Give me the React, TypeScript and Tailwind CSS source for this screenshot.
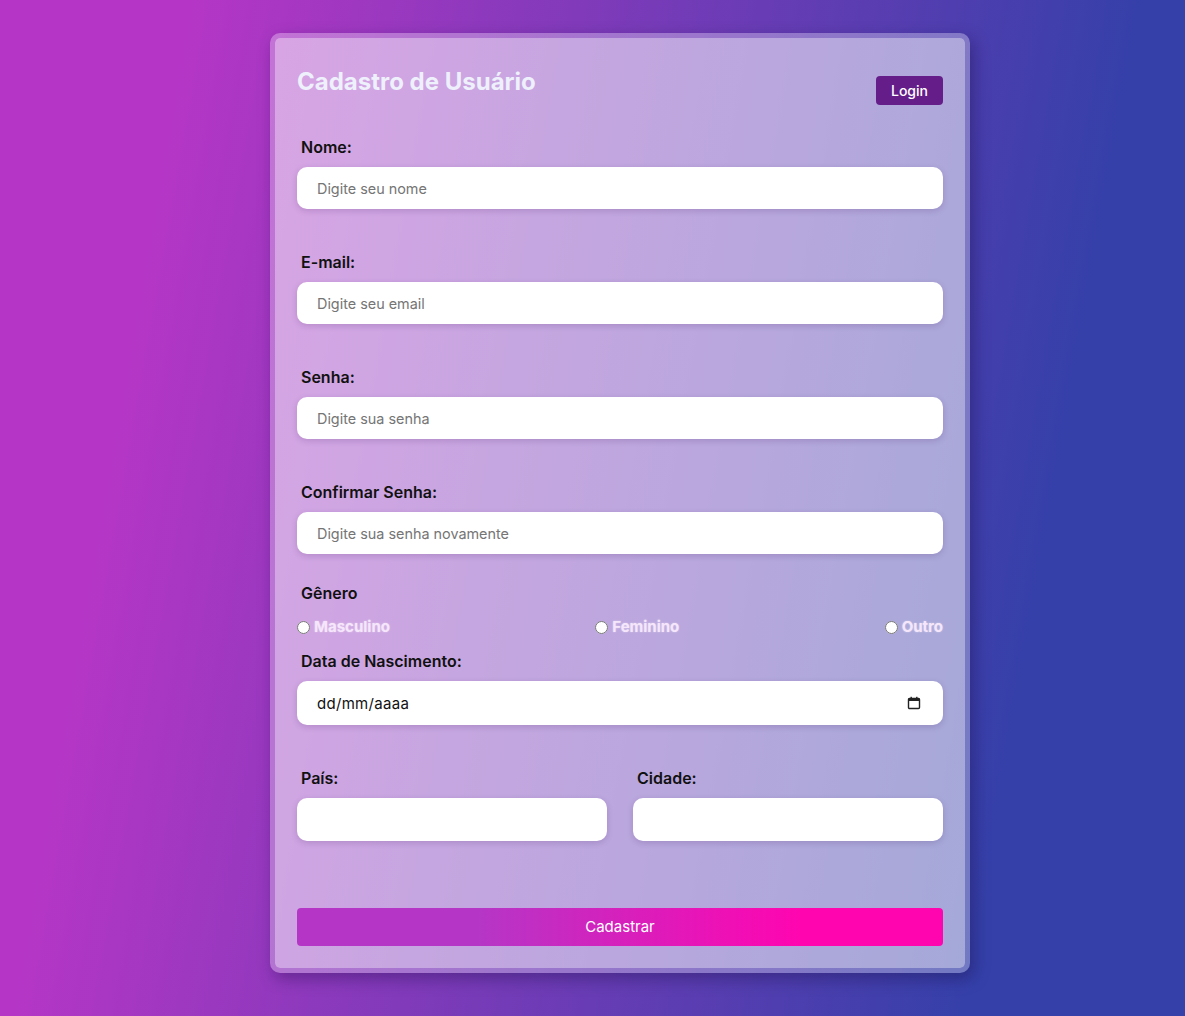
import React from "react";

const labelCls = "block pl-1 mb-2 text-base leading-6 font-semibold text-[#111]";
const inputCls =
  "block w-full h-[42px] rounded-[10px] bg-white px-5 text-[14.4px] text-[#222] placeholder:text-[#757575] outline-none shadow-[0_2px_6px_rgba(60,20,90,0.18)]";

function Field({ label, placeholder, type = "text" }: { label: string; placeholder?: string; type?: string }) {
  return (
    <div className="mb-[41px]">
      <label className={labelCls}>{label}</label>
      <input type={type} placeholder={placeholder} className={inputCls} />
    </div>
  );
}

function Radio({ label }: { label: string }) {
  return (
    <label className="flex items-center gap-[4px]">
      <input type="radio" name="genero" className="m-0 h-[13px] w-[13px]" />
      <span className="text-[15px] font-bold leading-5 text-[#f6e6fb] [text-shadow:0_0_2px_rgba(255,255,255,0.5)]">
        {label}
      </span>
    </label>
  );
}

export default function App() {
  return (
    <div
      className="min-h-screen w-full bg-[linear-gradient(100deg,#b536c6_14%,#3540a9_84%)] pl-[270px] pt-[33px] pb-[43px]"
      style={{ fontFamily: "Inter, 'Noto Sans', sans-serif" }}
    >
      <div className="w-[700px] rounded-[10px] border-[5px] border-white/30 bg-white/55 bg-clip-padding px-[22px] pt-[28px] pb-[22px] shadow-[4px_6px_16px_rgba(20,10,60,0.35)]">
        {/* Header */}
        <div className="flex items-start justify-between">
          <h2 className="text-2xl font-bold leading-8 text-[#eef0fb]">Cadastro de Usuário</h2>
          <button className="mt-[10px] h-[29px] w-[67px] rounded-[4px] bg-[#651d8a] text-sm font-medium text-white">
            Login
          </button>
        </div>

        <div className="mt-[30px]">
          <Field label="Nome:" placeholder="Digite seu nome" />
          <Field label="E-mail:" placeholder="Digite seu email" type="email" />
          <Field label="Senha:" placeholder="Digite sua senha" type="password" />

          <div className="mb-[27px]">
            <label className={labelCls}>Confirmar Senha:</label>
            <input type="password" placeholder="Digite sua senha novamente" className={inputCls} />
          </div>

          {/* Gênero */}
          <label className="block pl-1 text-base leading-6 font-semibold text-[#111]">Gênero</label>
          <div className="mt-[12px] mb-[12px] flex items-center justify-between">
            <Radio label="Masculino" />
            <Radio label="Feminino" />
            <Radio label="Outro" />
          </div>

          {/* Data de nascimento */}
          <div className="mb-[41px]">
            <label className={labelCls}>Data de Nascimento:</label>
            <div className="relative">
              <input
                type="text"
                placeholder="dd/mm/aaaa"
                className="block h-[44px] w-full rounded-[10px] bg-white px-5 text-[15px] tracking-[0.3px] text-[#111] placeholder:text-[#111] outline-none shadow-[0_2px_6px_rgba(60,20,90,0.18)]"
              />
              <svg
                className="absolute right-[22px] top-1/2 h-[14px] w-[14px] -translate-y-1/2"
                viewBox="0 0 14 14"
                fill="none"
              >
                <rect x="1.5" y="2.5" width="11" height="10" rx="1" stroke="#222" strokeWidth="1.4" />
                <rect x="1.5" y="2.5" width="11" height="2.5" fill="#222" />
                <rect x="3.5" y="0.8" width="1.4" height="2.5" fill="#222" />
                <rect x="9.1" y="0.8" width="1.4" height="2.5" fill="#222" />
              </svg>
            </div>
          </div>

          {/* País / Cidade */}
          <div className="grid grid-cols-2 gap-[26px]">
            <div>
              <label className={labelCls}>País:</label>
              <input type="text" className={inputCls + " h-[43px]"} />
            </div>
            <div>
              <label className={labelCls}>Cidade:</label>
              <input type="text" className={inputCls + " h-[43px]"} />
            </div>
          </div>

          <button className="mt-[67px] block h-[38px] w-full rounded-[4px] bg-[linear-gradient(to_right,#b536c6_28%,#ff05b0_78%)] text-[15px] text-white">
            Cadastrar
          </button>
        </div>
      </div>
    </div>
  );
}
